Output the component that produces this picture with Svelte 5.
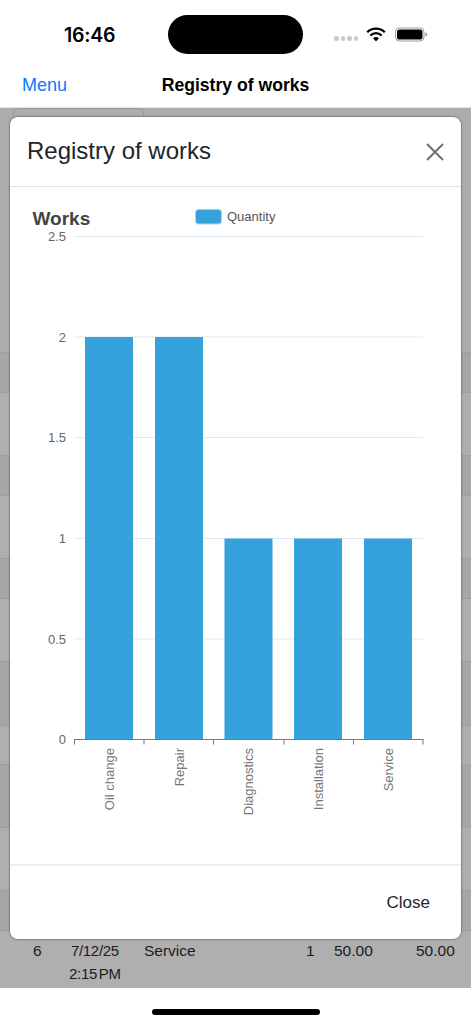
<script>
  const rows = [
    { h: 40, dark: true }, { h: 63 }, { h: 40, dark: true }, { h: 63 }, { h: 40, dark: true }, { h: 63 },
    { h: 64, dark: true }, { h: 39 }, { h: 63, dark: true }, { h: 63 }, { h: 40, dark: true }
  ];
  const gridY = [
    { y: 236.5, label: '2.5' }, { y: 337, label: '2' }, { y: 437.5, label: '1.5' },
    { y: 538.5, label: '1' }, { y: 639, label: '0.5' }, { y: 739.5, label: '0' }
  ];
  const bars = [
    { x: 85, top: 337, name: 'Oil change' }, { x: 155, top: 337, name: 'Repair' },
    { x: 224.5, top: 538.5, name: 'Diagnostics' }, { x: 294, top: 538.5, name: 'Installation' },
    { x: 364, top: 538.5, name: 'Service' }
  ];
  const ticks = [74.5, 144, 213.5, 284, 353.5, 423];
  const chartTop = 187;
</script>

<div class="page">
  <div class="status">
    <span class="time">16:46</span>
    <div class="island"></div>
    <div class="indicators">
      <div class="dots"><i></i><i></i><i></i><i></i></div>
      <svg class="wifi" width="20" height="15" viewBox="0 0 20 15" aria-hidden="true">
        <path d="M1.2 5.2a12.6 12.6 0 0 1 17.6 0" fill="none" stroke="#000" stroke-width="2.3" />
        <path d="M4.4 8.5a8 8 0 0 1 11.2 0" fill="none" stroke="#000" stroke-width="2.3" />
        <path d="M7 11.3a4 4 0 0 1 6 0L10 14.6z" fill="#000" />
      </svg>
      <svg class="battery" width="33" height="15" viewBox="0 0 33 15" aria-hidden="true">
        <rect x="0.5" y="1" width="28.5" height="13" rx="4" fill="none" stroke="#9a9a9a" />
        <rect x="2" y="2.5" width="25.5" height="10" rx="2.6" fill="#000" />
        <path d="M30.5 5.5c1.2.3 1.8 1 1.8 2s-.6 1.7-1.8 2z" fill="#9a9a9a" />
      </svg>
    </div>
  </div>

  <nav class="nav">
    <span class="menu">Menu</span>
    <span class="nav-title">Registry of works</span>
    <span></span>
  </nav>

  <main class="content">
    <div class="top-area"><div class="tab"></div></div>
    {#each rows as row}
      <div class="row" class:dark={row.dark} style="height:{row.h}px"></div>
    {/each}
    <div class="last-row">
      <span class="c-num">6</span>
      <span class="c-date">7/12/25<br />2:15 PM</span>
      <span class="c-name">Service</span>
      <span class="c-qty">1</span>
      <span class="c-price">50.00</span>
      <span class="c-sum">50.00</span>
    </div>

    <section class="modal">
      <header class="modal-head">
        <h2>Registry of works</h2>
        <svg class="close-x" width="18" height="18" viewBox="0 0 18 18" aria-hidden="true">
          <path d="M1 1l16 16M17 1L1 17" stroke="#6b6b6b" stroke-width="1.8" fill="none" />
        </svg>
      </header>
      <div class="chart">
        <svg width="451" height="677" viewBox="10 {chartTop} 451 677">
          <text x="32.5" y="224.5" class="chart-title">Works</text>
          <rect x="195.5" y="209.5" width="26" height="14.5" rx="3" fill="#36a2dc" stroke="#a5d6f0" />
          <text x="227" y="221" class="legend">Quantity</text>
          {#each gridY as g}
            <line x1="74" x2="423" y1={g.y} y2={g.y} stroke="#e4e8f0" />
            <text x="66" y={g.y + 4.5} text-anchor="end" class="tick">{g.label}</text>
          {/each}
          {#each bars as b}
            <rect x={b.x} y={b.top} width="48" height={739.5 - b.top} fill="#36a2dc" />
            <text transform="translate({b.x + 24 + 4.5} 748) rotate(-90)" text-anchor="end" class="cat">{b.name}</text>
          {/each}
          <line x1="74" x2="423.5" y1="739.5" y2="739.5" stroke="#777" />
          {#each ticks as t}
            <line x1={t} x2={t} y1="739.5" y2="744.5" stroke="#777" />
          {/each}
        </svg>
      </div>
      <footer class="modal-foot"><span>Close</span></footer>
    </section>
  </main>

  <div class="home"><div class="home-bar"></div></div>
</div>

<style>
  :global(body) { margin: 0; background: #fff; }
  .page {
    width: 471px; height: 1024px; display: flex; flex-direction: column; overflow: hidden;
    font-family: "Liberation Sans", Arial, sans-serif; color: #000; background: #fff;
  }
  .status { height: 62px; position: relative; flex: none; display: flex; align-items: flex-start; }
  .time { margin: 23px 0 0 64px; font-family: Inter, sans-serif; font-size: 19.5px; line-height: 24px; font-weight: 600; letter-spacing: -0.2px; }
  .island { position: absolute; left: 168px; top: 15px; width: 135px; height: 39px; border-radius: 20px; background: #000; }
  .indicators { position: absolute; left: 334px; top: 27px; display: flex; align-items: center; }
  .dots { display: flex; gap: 2px; margin: 8px 8px 0 0; }
  .dots i { width: 4.5px; height: 4.5px; border-radius: 50%; background: #c9c9c9; }
  .wifi { margin-right: 9px; }
  .nav { height: 46px; flex: none; display: grid; grid-template-columns: 1fr auto 1fr; align-items: center; padding: 0 22px; box-sizing: border-box; border-bottom: 1px solid #e4e4e4; }
  .menu { color: #0a7aff; font-size: 18px; line-height: 44px; }
  .nav-title { font-size: 17.6px; font-weight: 700; line-height: 44px; }
  .content { height: 880px; flex: none; position: relative; background: #afafaf; color: #1c1c1c; }
  .top-area { height: 244px; background: #acaeac; padding-left: 13px; box-sizing: border-box; }
  .tab { width: 131px; height: 20px; border: 1px solid #999b99; border-bottom: 0; border-radius: 6px 6px 0 0; box-sizing: border-box; }
  .row { box-sizing: border-box; border-top: 1px solid #9d9fa1; background: #afafaf; }
  .row.dark { background: #a6a6a6; }
  .last-row { height: 58px; position: relative; box-sizing: border-box; border-top: 1px solid #9d9fa1; font-size: 15.5px; line-height: 23px; }
  .last-row span { position: absolute; top: 8px; }
  .c-num { left: 33px; }
  .c-date { left: 69px; text-align: center; font-size: 15px; letter-spacing: -0.3px; word-spacing: -2px; }
  .c-name { left: 144px; }
  .c-qty { left: 306px; }
  .c-price { left: 334px; }
  .c-sum { left: 416px; }
  .modal {
    position: absolute; left: 10px; top: 9px; width: 451px; height: 822px; background: #fff; border-radius: 8px;
    box-shadow: 0 0 0 1px rgba(0, 0, 0, 0.12), 0 0 3px rgba(0, 0, 0, 0.3);
    display: flex; flex-direction: column; overflow: hidden;
  }
  .modal-head { height: 70px; flex: none; box-sizing: border-box; border-bottom: 1px solid #dee2e6; display: flex; align-items: center; justify-content: space-between; padding: 0 17px 1px 17px; }
  h2 { margin: 0; font-size: 24px; font-weight: 400; color: #212529; }
  .close-x { margin-top: 1px; }
  .chart { height: 677px; flex: none; }
  .chart svg { display: block; }
  .chart-title { font: 700 19px "Liberation Sans", sans-serif; fill: #444; }
  .legend { font: 13px "Liberation Sans", sans-serif; fill: #555; }
  .tick { font: 13px "Liberation Sans", sans-serif; fill: #666; }
  .cat { font: 13px "Liberation Sans", sans-serif; fill: #777; }
  .modal-foot { flex: 1; border-top: 2px solid #eeeeee; display: flex; align-items: center; justify-content: flex-end; padding: 0 31px 0 0; font-size: 17px; color: #212529; }
  .modal-foot span { margin-top: 1px; }
  .home { flex: 1; display: flex; justify-content: center; align-items: flex-end; padding-bottom: 9px; }
  .home-bar { width: 168px; height: 6px; border-radius: 3px; background: #000; }
</style>
